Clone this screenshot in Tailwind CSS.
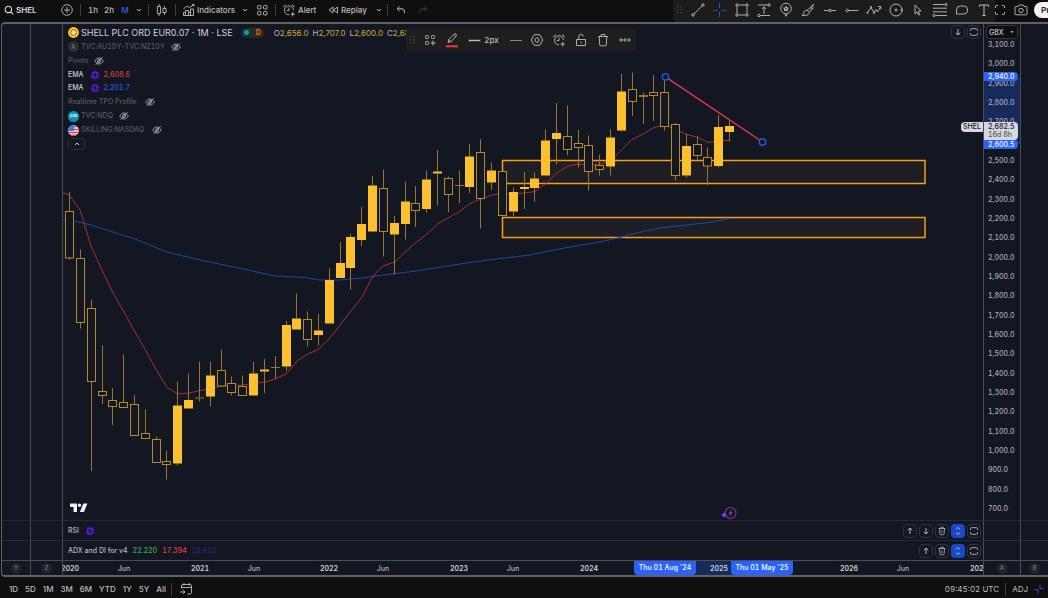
<!DOCTYPE html>
<html lang="en">
<head>
<meta charset="utf-8">
<meta name="viewport" content="width=device-width, initial-scale=1">
<title>SHEL – Chart</title>
<script src="https://cdn.jsdelivr.net/npm/@tailwindcss/browser@4"></script>
</head>
<body class="flex h-screen flex-col overflow-hidden bg-[#0f0f0f] font-['Inter',sans-serif] text-[8px] font-medium leading-[10px] text-[#bdbdbd] tabular-nums">

<!-- Shared symbols -->
<svg class="hidden" aria-hidden="true">
  <symbol id="chev" viewBox="0 0 8 8"><path d="M2 3l2 2 2-2" fill="none" stroke="currentColor"/></symbol>
  <symbol id="grip" viewBox="0 0 6 10"><g fill="#4c4c4c"><rect x="0" y="1" width="1.3" height="1.3"/><rect x="3.5" y="1" width="1.3" height="1.3"/><rect x="0" y="4.2" width="1.3" height="1.3"/><rect x="3.5" y="4.2" width="1.3" height="1.3"/><rect x="0" y="7.4" width="1.3" height="1.3"/><rect x="3.5" y="7.4" width="1.3" height="1.3"/></g></symbol>
  <symbol id="eye" viewBox="0 0 10 10"><g fill="none" stroke="#a8a8a8" stroke-width=".9"><path d="M.7 5C2 2.800 3.400 2 5 2s3 .8 4.300 3C8 7.200 6.600 8 5 8S2 7.200.7 5z"/><circle cx="5" cy="5" r="1.500"/><path d="M1.700 8.800L8.600 1.200"/></g></symbol>
  <symbol id="sync" viewBox="0 0 10 10"><circle cx="5" cy="5" r="4.800" fill="#24145a"/><circle cx="5" cy="5" r="3" fill="none" stroke="#6226e6" stroke-width="1.200" stroke-dasharray="7.800 1.600" stroke-dashoffset="-1"/><path d="M8.500 3.500L7 5.800 6 4.300zM1.500 6.500L3 4.200l1 1.500z" fill="#6226e6"/></symbol>
  <symbol id="up" viewBox="0 0 10 10"><path d="M5 8V2M2.700 4.300L5 2l2.300 2.300" fill="none" stroke="currentColor"/></symbol>
  <symbol id="down" viewBox="0 0 10 10"><path d="M5 2v6M2.700 5.700L5 8l2.300-2.300" fill="none" stroke="currentColor"/></symbol>
  <symbol id="trash" viewBox="0 0 10 10"><path d="M1.500 2.500h7M3.700 2.300V1.200h2.600v1.100M2.500 2.500l.4 5.500q0 .7.7.7h2.800q.7 0 .7-.7l.4-5.500M5 4.300v2.700" fill="none" stroke="currentColor" stroke-width=".8"/></symbol>
  <symbol id="updown" viewBox="0 0 10 10"><path d="M3 3.400L5 1.500l2 1.900M3 6.600l2 1.900 2-1.900" fill="none" stroke="currentColor"/></symbol>
  <symbol id="maxi" viewBox="0 0 10 10"><path d="M1.500 4V2.700q0-1 1-1h5q1 0 1 1V4M1.500 6v1.300q0 1 1 1h5q1 0 1-1V6" fill="none" stroke="currentColor" stroke-width=".9"/></symbol>
  <symbol id="alarm" viewBox="0 0 14 14"><g fill="none" stroke="currentColor" stroke-width=".9"><path d="M11.500 7.200A4.500 4.500 0 1 0 7 11.800M7 4.500V7.500H4.800M1.600 4.200a3 3 0 0 1 2.300-2.400M10.100 1.800a3 3 0 0 1 2.300 2.400M10.700 9v4.400M8.500 11.200h4.400"/></g></symbol>
</svg>

<header class="flex h-[22px] shrink-0 items-center justify-between">
  <nav class="flex items-center pb-[3px]" aria-label="Chart toolbar">
    <button class="flex w-[50px] items-center gap-0.5 pl-1 text-[8px] font-semibold text-[#dbdbdb]"><svg class="size-2.5 shrink-0" viewBox="0 0 10 10"><path d="M6.800 6.800L9.300 9.500M1.200 4.400a3.200 3.200 0 1 0 6.400 0 3.200 3.200 0 1 0-6.400 0" fill="none" stroke="currentColor" stroke-width="1.100"/></svg>SHEL</button>
    <button class="grid w-[30px] place-items-center" aria-label="Compare"><svg class="ml-1 size-3.5" viewBox="0 0 14 14"><path d="M7 4v6M4 7h6M1.700 7a5.300 5.300 0 1 0 10.600 0 5.300 5.300 0 1 0-10.600 0" fill="none" stroke="currentColor" stroke-width=".9"/></svg></button>
    <i class="h-3 w-px bg-[#3d3d3d]"></i>
    <button class="ml-1 w-4">1h</button>
    <button class="w-4">2h</button>
    <button class="w-4 text-[#2962ff]">M</button>
    <button class="mx-0.5 w-2" aria-label="Intervals"><svg class="size-2" viewBox="0 0 8 8"><use href="#chev"/></svg></button>
    <i class="ml-[3px] h-3 w-px bg-[#3d3d3d]"></i>
    <button class="grid w-[26px] place-items-center" aria-label="Candles"><svg class="size-3.5" viewBox="0 0 14 14"><g fill="none" stroke="currentColor" stroke-width=".9"><path d="M4 1v2.500M4 10.500V13M2.400 3.500h3.200v7H2.400zM9.500 3v2.500M9.500 9.500V12M7.900 5.500h3.200v4H7.900z"/></g></svg></button>
    <i class="h-3 w-px bg-[#3d3d3d]"></i>
    <button class="ml-1.5 flex w-[59px] items-center gap-px"><svg class="size-3.5 shrink-0" viewBox="0 0 14 14"><path d="M1.500 12.500v-3h2v-2h3v2h2V6h3v6.500zM3.500 9.500v3M6.500 9.500v3M8.500 9v3.500M1.500 6l3.500-3 2.500 1.500L12 1.500M10 1.500h2v2" fill="none" stroke="currentColor" stroke-width=".9"/></svg>Indicators</button>
    <svg class="size-2" viewBox="0 0 8 8"><use href="#chev"/></svg>
    <button class="grid w-[26px] place-items-center" aria-label="Layouts"><svg class="size-3" viewBox="0 0 12 12"><g fill="none" stroke="currentColor" stroke-width=".9"><rect x="1.500" y="1.500" width="3.500" height="3.500" rx="1"/><rect x="7.500" y="1.500" width="3.500" height="3.500" rx="1"/><rect x="1.500" y="7.500" width="3.500" height="3.500" rx="1"/><rect x="7.500" y="7.500" width="3.500" height="3.500" rx="1"/></g></svg></button>
    <i class="h-3 w-px bg-[#3d3d3d]"></i>
    <button class="ml-1.5 flex w-[45px] items-center gap-0.5"><svg class="size-3.5 shrink-0"><use href="#alarm"/></svg>Alert</button>
    <button class="flex w-[48px] items-center gap-0.5"><svg class="size-3 shrink-0" viewBox="0 0 12 12"><path d="M6 3v6L2 6zM10.500 3v6l-4-3z" fill="none" stroke="currentColor" stroke-width=".9"/></svg>Replay</button>
    <svg class="size-2" viewBox="0 0 8 8"><use href="#chev"/></svg>
    <i class="ml-1 h-3 w-px bg-[#3d3d3d]"></i>
    <button class="grid w-[25px] place-items-center" aria-label="Undo"><svg class="size-2.5" viewBox="0 0 10 10"><path d="M3.500 1.500L1.200 3.800l2.300 2.300M1.500 3.800h4.500q2.500 0 2.500 3V8" fill="none" stroke="currentColor"/></svg></button>
    <button class="grid w-[20px] place-items-center text-[#3d3d3d]" aria-label="Redo"><svg class="size-2.5" viewBox="0 0 10 10"><path d="M6.500 1.500l2.300 2.300-2.300 2.300M8.500 3.800H4q-2.500 0-2.500 3V8" fill="none" stroke="currentColor"/></svg></button>
  </nav>

  <div class="flex h-full items-center">
    <div class="flex h-full items-center rounded-b bg-[#1c1c1c] pb-[3px]" role="toolbar" aria-label="Favourite drawing tools">
      <span class="grid w-3.5 place-items-center"><svg class="h-2.5 w-1.5"><use href="#grip"/></svg></span>
      <button class="grid w-[22px] place-items-center" aria-label="Trend line"><svg class="size-3.5" viewBox="0 0 14 14"><g fill="none" stroke="currentColor" stroke-width=".9"><path d="M3 11L11 3"/><circle cx="2" cy="12" r="1.200"/><circle cx="12" cy="2" r="1.200"/></g></svg></button>
      <button class="grid w-[22px] place-items-center text-[#2450c8]" aria-label="Crosshair"><svg class="size-3.5" viewBox="0 0 14 14"><path d="M6.500 0v5M6.500 9v5M0 7.500h4.500M8.500 7.500H13" stroke="currentColor"/></svg></button>
      <button class="grid w-[22px] place-items-center" aria-label="Rectangle"><svg class="size-3.5" viewBox="0 0 14 14"><g fill="none" stroke="currentColor" stroke-width=".9"><path d="M3.500 2h7M3.500 12h7M2 3.500v7M12 3.500v7"/><circle cx="2" cy="2" r="1.200"/><circle cx="12" cy="2" r="1.200"/><circle cx="2" cy="12" r="1.200"/><circle cx="12" cy="12" r="1.200"/></g></svg></button>
      <button class="grid w-[22px] place-items-center" aria-label="Price range"><svg class="size-3.5" viewBox="0 0 14 14"><g fill="none" stroke="currentColor" stroke-width=".9"><path d="M1 2h9.500M3.500 12.500H13M7 11V4M5 6l2-2.200L9 6"/><circle cx="12" cy="2" r="1.200"/><circle cx="2" cy="12.500" r="1.200"/></g></svg></button>
      <button class="grid w-[22px] place-items-center" aria-label="Pin"><svg class="h-4 w-3.5" viewBox="0 0 14 16"><circle cx="7" cy="6.500" r="5.300" fill="none" stroke="currentColor" stroke-width=".9"/><path d="M7 3.300l1 2.100 2.300.3-1.700 1.600.4 2.300-2-1.100-2 1.100.4-2.300L3.700 5.700 6 5.400zM5.500 12.500h3L7 15z" fill="currentColor"/><circle cx="7" cy="6.500" r=".8" fill="#1c1c1c"/></svg></button>
      <button class="grid w-[22px] place-items-center" aria-label="Brush"><svg class="size-3.5" viewBox="0 0 14 14"><path d="M1 12.500c2-.5 1.500-2.500 2.300-4 .8-1.300 2.700-1.500 4-.5s1 2.500 0 3.500c-1.500 1.200-4 1-6.300 1zM6 7.500L12.700 1.200M8.500 9L12.800 4.500M12.700 1.200l-3 5.300" fill="none" stroke="currentColor" stroke-width=".9"/></svg></button>
      <button class="grid w-[22px] place-items-center" aria-label="Horizontal line"><svg class="size-3.5" viewBox="0 0 14 14"><g fill="none" stroke="currentColor" stroke-width=".9"><path d="M1 7.500h4.700M8.300 7.500H13"/><circle cx="7" cy="7.500" r="1.300"/></g></svg></button>
      <button class="grid w-[22px] place-items-center" aria-label="Horizontal ray"><svg class="size-3.5" viewBox="0 0 14 14"><g fill="none" stroke="currentColor" stroke-width=".9"><path d="M3.500 7.500H13.500"/><circle cx="2.200" cy="7.500" r="1.300"/></g></svg></button>
      <button class="grid w-[22px] place-items-center" aria-label="Elliott wave"><svg class="size-4" viewBox="0 0 16 14"><g fill="none" stroke="currentColor" stroke-width=".9"><path d="M1.500 9.500L5 4.500l3 5 2-3 1.500 2.500 3-5M12 3.500h2.800v2.800"/><circle cx="1.500" cy="9.800" r=".7"/><circle cx="5" cy="4.200" r=".7"/><circle cx="8" cy="9.800" r=".7"/></g></svg></button>
      <button class="grid w-[22px] place-items-center" aria-label="Circle"><svg class="size-3.5" viewBox="0 0 14 14"><g fill="none" stroke="currentColor" stroke-width=".9"><circle cx="7" cy="7" r="6"/><circle cx="7" cy="7" r="1"/><circle cx="13" cy="7" r="1" fill="#1c1c1c"/></g></svg></button>
      <button class="grid w-[22px] place-items-center" aria-label="Arrow"><svg class="size-3" viewBox="0 0 12 12"><path d="M3 1l6 6-2.800.3 1.600 3.200-1.300.6L5 8 3 9.800z" fill="none" stroke="currentColor" stroke-width=".9"/></svg></button>
      <button class="grid w-[22px] place-items-center" aria-label="Fib retracement"><svg class="size-4" viewBox="0 0 16 14"><g fill="none" stroke="currentColor" stroke-width=".9"><path d="M1 1.500h11.500M1 5.200h14M1 8.800h14M3.500 12.500H15"/><circle cx="14" cy="1.500" r="1.100"/><circle cx="2" cy="12.500" r="1.100"/></g></svg></button>
      <button class="grid w-[22px] place-items-center" aria-label="Callout"><svg class="size-3.5" viewBox="0 0 14 14"><path d="M5.500 3h3.200a4 4 0 0 1 0 8H1.500V7a4 4 0 0 1 4-4z" fill="none" stroke="currentColor" stroke-width=".9"/></svg></button>
      <button class="grid w-[22px] place-items-center" aria-label="Text"><svg class="size-3.5" viewBox="0 0 14 14"><path d="M2.500 3.800V2h9v1.800M7 2v10.500M5.500 12.500h3" fill="none" stroke="currentColor"/></svg></button>
    </div>
    <button class="mb-[3px] grid w-2.5 place-items-center" aria-label="Fullscreen"><svg class="size-2.5" viewBox="0 0 10 10"><path d="M.5 3V1.500q0-1 1-1H3M7 .5h1.500q1 0 1 1V3M9.500 7v1.500q0 1-1 1H7M3 9.500H1.500q-1 0-1-1V7" fill="none" stroke="currentColor"/></svg></button>
    <button class="mb-[3px] grid w-[29px] place-items-center" aria-label="Snapshot"><svg class="ml-0.5 size-3.5" viewBox="0 0 14 14"><g fill="none" stroke="currentColor" stroke-width=".9"><path d="M1 4.500q0-1 1-1h2l1-1.500h4l1 1.500h2q1 0 1 1v6.300q0 1-1 1H2q-1 0-1-1z"/><circle cx="7" cy="7.500" r="2.200"/></g></svg></button>
    <button class="mb-[3px] h-4 w-3.5 overflow-hidden rounded-l-full bg-[#f2f2f2] pl-[7px] text-left text-[8px] font-semibold text-[#111]">Publish</button>
  </div>
</header>

<main class="relative ml-px grid min-h-0 flex-1 grid-cols-[29px_32px_minmax(0,1fr)_37px_27px] grid-rows-[minmax(0,1fr)_20px_20px_15px] rounded-l-sm border-y-2 border-l border-[#626266] bg-[#131722]">
  <!-- Price pane -->
  <div class="border-r border-[#4a4c54]"></div>
  <div class="border-r border-[#4a4c54]"></div>
  <section class="relative min-w-0 overflow-hidden border-r border-[#4a4c54]" aria-label="Price chart">
    <svg id="chart" class="absolute inset-0 size-full" viewBox="63 24 920 496" preserveAspectRatio="none">
      <g fill="#1e1f24" stroke="#f59c1b" stroke-width="1.500"><rect x="502.500" y="160.500" width="422.500" height="23"/><rect x="502.500" y="217.500" width="422.500" height="20"/></g>
      <path fill="none" stroke="#2145a8" d="M62 219.500L74 221L91 225L135 239L167 252L200 260L248 270L275 276L305 277.500L319 280L340 280L362 278L376 276L416 271L438 267.500L470 262.500L492 259.500L530 255L554 250L578 245.500L600 242L622 237L632 234L660 228L687 225L708 222.500L730 218.500"/>
      <path fill="none" stroke="#a52f34" d="M62 192L69.500 195.500L80 210L91 246L102 270L113 293L124 312L135 332L146 351L157 371L167 387.500L178 394L189 393L200 390.500L210 389L221 386L232 385.500L243 385L254 383.500L265 382L275 379L286 374L297 361L308 354L318 349.500L329 339L340 325L351 311L362 297L373 276L383 266L395 262L405 252L416 242.500L427 234L438 223.500L449 217.500L459 212L470 203.500L481 199L492 195L502 194L513 194L524 193L535 191.500L546 183.500L557 173L568 166L578 164L589 165L600 164L611 161L622 149.500L632 139.500L643 134L654 127.500L665 125L676 130L687 134.500L697 137L708 142.500L719 140.500L730 140.500"/>
      <g id="candles"></g>
      <path d="M665.500 76.800L762.500 142" stroke="#e8334a" stroke-width="1.500"/>
      <g fill="#131722" stroke="#2456e0" stroke-width="1.400"><circle cx="665.500" cy="76.800" r="3.200"/><circle cx="762.500" cy="142" r="3.200"/></g>
      <g><circle cx="730.500" cy="513" r="5.500" fill="#131722" stroke="#8e2f9e" stroke-width="1.200"/><path d="M731.800 509.500l-3.300 4h2l-1.200 3 3.300-4h-2z" fill="#b044c4"/><path d="M724 512l1 2 2 1-2 1-1 2-1-2-2-1 2-1z" fill="#6a4cff"/></g>
      <g fill="#f0f0f0" stroke="#050505" stroke-width=".8" paint-order="stroke"><path d="M70 503.500h7v8.500h-3.500v-5H70z"/><circle cx="79.500" cy="505.300" r="1.700"/><path d="M83.300 503.500H87.500L84 512H79.800z"/></g>
    </svg>

    <div class="relative ml-[5px] mt-0.5 grid h-[125px] w-fit auto-rows-fr items-center text-[7px] text-[#555861]">
      <div class="flex items-center">
        <svg class="size-[11px]" viewBox="0 0 11 11"><circle cx="5.500" cy="5.500" r="5.400" fill="#f7d117"/><circle cx="5.500" cy="5.500" r="3.200" fill="#e8402a"/><circle cx="5.500" cy="5.500" r="2.300" fill="#fdf3c4"/></svg>
        <h1 class="ml-0.5 whitespace-nowrap text-[9px] font-normal text-[#d0d2d8] proportional-nums">SHELL PLC ORD EUR0.07 · 1M · LSE</h1>
        <span class="ml-2 flex h-2.5 overflow-hidden rounded-full text-[7px] font-semibold"><i class="grid w-3 place-items-center bg-[#123233]"><b class="size-[5px] rounded-full bg-[#0fa388]"></b></i><span class="w-[11px] bg-[#3a2518] text-center text-[#e07a1c]">D</span></span>
        <p class="ml-2.5 flex gap-1 whitespace-nowrap text-[8px] font-normal text-[#d0a638] proportional-nums"><span><span class="text-[#b8bac0]">O</span>2,656.0</span><span><span class="text-[#b8bac0]">H</span>2,707.0</span><span><span class="text-[#b8bac0]">L</span>2,600.0</span><span><span class="text-[#b8bac0]">C</span>2,682.5</span></p>
      </div>
      <div class="flex items-center"><span class="grid size-[11px] place-items-center rounded-full bg-[#2e2e2e] text-[6px] text-[#777]">A</span><span class="ml-0.5">TVC:AU10Y-TVC:NZ10Y</span><svg class="ml-1.5 size-2.5"><use href="#eye"/></svg></div>
      <div class="flex items-center">Pivots<svg class="ml-1.5 size-2.5"><use href="#eye"/></svg></div>
      <div class="flex items-center text-[#c9cbd1]">EMA<svg class="ml-1.5 size-2.5"><use href="#sync"/></svg><span class="ml-1 text-[#d23c40]">2,608.6</span></div>
      <div class="flex items-center text-[#c9cbd1]">EMA<svg class="ml-1.5 size-2.5"><use href="#sync"/></svg><span class="ml-1 text-[#285ae0]">2,201.7</span></div>
      <div class="flex items-center">Realtime TPO Profile<svg class="ml-2 size-2.5"><use href="#eye"/></svg></div>
      <div class="flex items-center"><span class="grid size-[11px] place-items-center rounded-full bg-[#0a93b5] text-[4px] font-bold text-white">100</span><span class="ml-0.5">TVC:NDQ</span><svg class="ml-1.5 size-2.5"><use href="#eye"/></svg></div>
      <div class="flex items-center"><svg class="size-[11px]" viewBox="0 0 11 11"><clipPath id="round"><circle cx="5.500" cy="5.500" r="5.400"/></clipPath><g clip-path="url(#round)"><path d="M0 0h11v11H0z" fill="#f2f2f2"/><path d="M5 1.500h6M5 4.500h6M0 7.500h11M0 10.300h11" stroke="#e23b3b" stroke-width="1.500"/><path d="M0 0h6v6H0z" fill="#2f7be0"/></g></svg><span class="ml-0.5">SKILLING:NASDAQ</span><svg class="ml-2 size-2.5"><use href="#eye"/></svg></div>
      <button class="grid h-3 w-[17px] place-items-center rounded-sm border border-[#2f323b] text-[#c9cbd1]" aria-label="Collapse legend"><svg class="size-2" viewBox="0 0 8 8"><path d="M2 5l2-2 2 2" fill="none" stroke="currentColor"/></svg></button>
    </div>

    <div class="absolute right-0.5 top-px flex gap-0.5 text-[#b5b7bd]">
      <button class="grid size-3.5 place-items-center rounded-sm border border-[#2f323b]" aria-label="Move pane down"><svg class="size-2.5"><use href="#down"/></svg></button>
      <button class="grid size-3.5 place-items-center rounded-sm border border-[#2f323b]" aria-label="Maximise pane"><svg class="size-2.5"><use href="#maxi"/></svg></button>
    </div>
    <span class="absolute right-0 top-[98px] rounded-l-sm bg-[#d6d8e0] px-0.5 text-[7px] leading-[10px] text-[#131722]">SHEL</span>

    <div class="absolute left-[343px] top-[5px] flex h-[22px] items-center rounded bg-[#1e1e1e]" role="toolbar" aria-label="Drawing options">
      <span class="grid w-[13px] place-items-center"><svg class="h-2.5 w-1.5"><use href="#grip"/></svg></span>
      <button class="grid w-[22px] place-items-center" aria-label="Templates"><svg class="size-3" viewBox="0 0 12 12"><g fill="none" stroke="currentColor" stroke-width=".9"><rect x="1.500" y="1.500" width="3" height="3" rx=".8"/><rect x="7.500" y="1.500" width="3" height="3" rx=".8"/><rect x="1.500" y="7.500" width="3" height="3" rx=".8"/><path d="M9 6.500v5M6.500 9h5"/></g></svg></button>
      <button class="grid w-[22px] place-items-center" aria-label="Line colour"><svg class="h-4 w-3.5" viewBox="0 0 14 16"><path d="M3 10.500l.8-3L9 2.200q1-.8 2 .1t0 2L6 9.700zM4 7.500l2 2M9 3.500l1.500 1.500" fill="none" stroke="currentColor" stroke-width=".9"/><path d="M1 13.300h12v2H1z" fill="#f23645"/></svg></button>
      <button class="flex w-[42px] items-center justify-center gap-1"><i class="h-px w-[11px] bg-current ring-1 ring-current/20"></i>2px</button>
      <button class="grid w-[21px] place-items-center" aria-label="Line style"><i class="h-px w-3 bg-[#888]"></i></button>
      <button class="grid w-[22px] place-items-center" aria-label="Settings"><svg class="size-3.5" viewBox="0 0 14 14"><g fill="none" stroke="currentColor" stroke-width=".9"><path d="M4.200 1.700h5.600L12.800 7l-3 5.300H4.200L1.200 7z" stroke-linejoin="round"/><circle cx="7" cy="7" r="2.200"/></g></svg></button>
      <button class="grid w-[22px] place-items-center" aria-label="Add alert"><svg class="size-3.5"><use href="#alarm"/></svg></button>
      <button class="grid w-[22px] place-items-center" aria-label="Lock"><svg class="size-3.5" viewBox="0 0 14 14"><path d="M2.500 6.500h9v6h-9zM4.700 6.500V4a2.300 2.300 0 0 1 4.600-.5M7 8.700v1.600" fill="none" stroke="currentColor" stroke-width=".9" stroke-linejoin="round"/></svg></button>
      <button class="grid w-[22px] place-items-center" aria-label="Delete"><svg class="size-3.5" viewBox="0 0 14 14"><path d="M2 3.500h10M5 3.300V1.500h4v1.800M3.300 3.500l.4 8.500q0 .8.800.8h5q.8 0 .8-.8l.4-8.500" fill="none" stroke="currentColor" stroke-width=".9"/></svg></button>
      <button class="grid w-[22px] place-items-center" aria-label="More"><svg class="h-2 w-3" viewBox="0 0 12 8"><g fill="none" stroke="currentColor" stroke-width=".9"><circle cx="2" cy="4" r="1.200"/><circle cx="6" cy="4" r="1.200"/><circle cx="10" cy="4" r="1.200"/></g></svg></button>
    </div>
  </section>

  <aside class="relative overflow-hidden border-r border-[#4a4c54] text-[7px] text-[#a9abb2]" aria-label="Price scale">
    <div class="absolute inset-x-0 top-[53px] h-[67px] bg-[#172a5c]"></div>
    <ol id="prices" class="absolute inset-x-0 bottom-1.5 top-4 flex flex-col justify-between pl-1"></ol>
    <label class="absolute left-0.5 top-px block h-3.5 w-8">
      <span class="sr-only">Currency</span>
      <select class="block size-full appearance-none rounded-sm border border-[#33353c] bg-[#0f0f0f] pl-0.5 text-[7px] leading-none text-[#c9cbd1]"><option>GBX</option></select>
      <svg class="pointer-events-none absolute right-0.5 top-[3px] size-2" viewBox="0 0 8 8"><path d="M2.200 3.200h3.600L4 5z" fill="#c9cbd1"/></svg>
    </label>
    <span class="absolute left-0 top-12 w-[34px] rounded-r-sm bg-[#2962ff] pl-1 leading-[9px] text-white">2,940.0</span>
    <span class="absolute left-0 top-[98px] w-[34px] rounded-r-sm bg-[#d6d8e0] pl-1 leading-[8px] text-[#131722]"><span class="block pt-px">2,682.5</span><span class="block pb-px text-[#555a66]">16d 8h</span></span>
    <span class="absolute left-0 top-[116px] w-[34px] rounded-r-sm bg-[#2962ff] pl-1 leading-[9px] text-white">2,600.5</span>
  </aside>
  <div></div>

  <!-- RSI pane -->
  <div class="border-r border-t border-[#4a4c54] border-t-[#262a35]"></div>
  <div class="border-r border-t border-[#4a4c54] border-t-[#262a35]"></div>
  <section class="flex items-center justify-between border-r border-t border-[#4a4c54] border-t-[#262a35] pl-[5px] pr-0.5" aria-label="RSI">
    <p class="flex items-center text-[7px] text-[#b5b7bd]">RSI<svg class="ml-1.5 size-2.5"><use href="#sync"/></svg></p>
    <div class="flex gap-0.5 text-[#b5b7bd]">
      <button class="grid size-3.5 place-items-center rounded-sm border border-[#2f323b]" aria-label="Up"><svg class="size-2.5"><use href="#up"/></svg></button>
      <button class="grid size-3.5 place-items-center rounded-sm border border-[#2f323b]" aria-label="Down"><svg class="size-2.5"><use href="#down"/></svg></button>
      <button class="grid size-3.5 place-items-center rounded-sm border border-[#2f323b]" aria-label="Delete pane"><svg class="size-2.5"><use href="#trash"/></svg></button>
      <button class="grid size-3.5 place-items-center rounded-sm bg-[#1848cc]" aria-label="Expand pane"><svg class="size-2.5"><use href="#updown"/></svg></button>
      <button class="grid size-3.5 place-items-center rounded-sm border border-[#2f323b]" aria-label="Maximise pane"><svg class="size-2.5"><use href="#maxi"/></svg></button>
    </div>
  </section>
  <div class="border-r border-t border-[#4a4c54] border-t-[#262a35]"></div>
  <div class="border-t border-[#262a35]"></div>

  <!-- ADX pane -->
  <div class="border-r border-t border-[#4a4c54] border-t-[#262a35]"></div>
  <div class="border-r border-t border-[#4a4c54] border-t-[#262a35]"></div>
  <section class="flex items-center justify-between border-r border-t border-[#4a4c54] border-t-[#262a35] pl-[5px] pr-0.5" aria-label="ADX and DI">
    <p class="flex gap-[5px] text-[7px] text-[#b5b7bd]">ADX and DI for v4 <span class="text-[#3fa846]">22.220</span><span class="text-[#e03e43]">17.394</span><span class="text-[#33208a]">22.612</span></p>
    <div class="flex gap-0.5 text-[#b5b7bd]">
      <button class="grid size-3.5 place-items-center rounded-sm border border-[#2f323b]" aria-label="Up"><svg class="size-2.5"><use href="#up"/></svg></button>
      <button class="grid size-3.5 place-items-center rounded-sm border border-[#2f323b]" aria-label="Delete pane"><svg class="size-2.5"><use href="#trash"/></svg></button>
      <button class="grid size-3.5 place-items-center rounded-sm bg-[#1848cc]" aria-label="Expand pane"><svg class="size-2.5"><use href="#updown"/></svg></button>
      <button class="grid size-3.5 place-items-center rounded-sm border border-[#2f323b]" aria-label="Maximise pane"><svg class="size-2.5"><use href="#maxi"/></svg></button>
    </div>
  </section>
  <div class="border-r border-t border-[#4a4c54] border-t-[#262a35]"></div>
  <div class="border-t border-[#262a35]"></div>

  <!-- Time scale -->
  <div class="grid place-items-center border-r border-t border-[#4a4c54] text-[6px] text-[#777]"><span class="grid size-[11px] place-items-center rounded-full bg-[#22242b]">Y</span></div>
  <div class="grid place-items-center border-r border-t border-[#4a4c54] text-[6px] text-[#777]"><span class="grid size-[11px] place-items-center rounded-full bg-[#22242b]">Z</span></div>
  <div id="times" class="relative overflow-hidden border-r border-t border-[#4a4c54] text-[7px] text-[#b5b7bd]">
    <div class="absolute inset-y-0 left-[603px] w-[97px] bg-[#172a5c]"></div>
  </div>
  <div class="grid place-items-center border-r border-t border-[#4a4c54] text-[6px] text-[#777]"><span class="grid size-[11px] place-items-center rounded-full bg-[#22242b]">A</span></div>
  <div class="grid place-items-center border-t border-[#4a4c54] text-[6px] text-[#777]"><span class="grid size-[11px] place-items-center rounded-full bg-[#22242b]">B</span></div>
</main>

<footer class="flex h-[21px] shrink-0 items-center justify-between pt-0.5">
  <div class="flex items-center gap-[7px] pl-[9px] proportional-nums">
    <button>1D</button><button>5D</button><button>1M</button><button>3M</button><button>6M</button><button>YTD</button><button>1Y</button><button>5Y</button><button>All</button>
    <i class="-ml-0.5 h-3 w-px bg-[#3d3d3d]"></i>
    <button aria-label="Go to date"><svg class="size-3.5" viewBox="0 0 14 14"><path d="M2.500 6.500V4q0-1.500 1.500-1.500h7q1.500 0 1.500 1.500v6.500q0 1.500-1.500 1.500H8.500M2.500 5.500h10M5 1v2.500M10 1v2.500M1 10h5M4 8l2 2-2 2" fill="none" stroke="currentColor" stroke-width=".9"/></svg></button>
  </div>
  <div class="flex items-center gap-1.5 pr-1">
    <button class="font-normal">09:45:02 UTC</button>
    <i class="h-3 w-px bg-[#3d3d3d]"></i>
    <button class="font-normal">ADJ</button>
    <button class="text-[#2450d8]" aria-label="Toggle panel"><svg class="size-2.5" viewBox="0 0 10 10"><path d="M.5 5.500H4v4M6 .5v4h3.500" fill="none" stroke="currentColor"/></svg></button>
  </div>
</footer>

<script>
// Monthly candles from Jan 2020: [high, bodyTop, bodyBottom, low, kind] (0 falling, 1 rising, 2 flat)
const data = [
[192,211.5,258,259.5,0],[249.5,258.5,322.5,328.5,0],[299.5,308.5,381.5,471,0],[345.5,391.5,395.5,404,0],[388,400.5,406.5,425,0],[354.5,402.5,407.5,408,0],[395,404.5,435.5,435.5,0],[409.5,433.5,438.5,438.5,0],[436.5,439.5,462.5,462.5,0],[450.5,461.5,464.5,479.5,0],
[381.5,405.5,463.5,465.5,1],[373.5,400,408.5,408.5,1],[361.5,397.5,398.5,401.5,2],[361.5,375.5,396.5,406.5,1],[349.5,370.5,386,386.5,0],[376.5,383.5,392.5,395.5,0],[375.5,386.5,395.5,395.5,0],[362,373.5,395.5,395.5,1],[359,369.5,371.5,393,1],[356.5,367,368,379,2],
[321,325,366.5,371,1],[293.5,318.5,329.5,329.5,1],[311.5,319.5,339.5,346.5,0],[314,330.5,335,345.5,1],[268.5,280,323.5,323.5,1],[242,263,278,278,1],[234,237,268,289.5,1],[207,224,240,246,1],[176,185.5,231.5,232,1],[169.5,188.5,231.5,256.5,0],
[216,223,234.5,274.5,1],[181.5,201.5,224,239.5,1],[186,203.5,210.5,227,0],[170.5,179.5,209,212.5,1],[150,171.5,173.5,205.5,1],[176.5,178.5,194.5,212,0],[170.5,185,186,203,2],[144,156.5,187,193,1],[139,152.5,198.5,228.5,0],[162.5,170.5,182.5,190,1],
[171,171.5,215.5,215.5,0],[187.5,192,211.5,216,1],[172,187,189,209,1],[172.5,178.5,188,202,1],[129.5,140.5,175.5,175.5,1],[103,133,139,164.5,1],[105.5,136.5,149.5,155,0],[130,143.5,147.5,167.5,0],[135.5,145.5,171.5,190.5,0],[154.5,165.5,169.5,175.5,0],
[129,137.5,166.5,175.5,1],[74,91.5,130.5,131.5,1],[72.5,89.5,101.5,116,0],[92.5,95,97,124,2],[75,92.5,95.5,121,0],[80,92.5,126.5,130.5,0],[123,124.5,175.5,180.5,0],[134,146,175.5,177.5,1],[136.5,144.5,155.5,159.5,0],[147.5,157.5,166,185,0],
[115,127,166,167.5,1],[120,126,132,141.5,1]];
let out = '';
data.forEach(([h, t, b, l, k], i) => {
  const x = 69.6 + 10.82 * i, c = Math.floor(x) + 0.5;
  out += `<path d="M${c} ${h}V${t}M${c} ${b}V${l}" stroke="#9a762a"/>`;
  if (k === 1) out += `<rect x="${c - 4.5}" y="${t}" width="9" height="${b - t}" fill="#fcc02e"/>`;
  else if (k === 2) out += `<rect x="${c - 4.5}" y="${t}" width="9" height="${b - t}" fill="#9a762a"/>`;
  else out += `<rect x="${c - 4}" y="${t}" width="8" height="${b - t}" fill="#131722" stroke="#b5892a"/>`;
});
document.getElementById('candles').innerHTML = out;

const prices = document.getElementById('prices');
for (let p = 3100; p >= 700; p -= 100) {
  const li = document.createElement('li');
  li.textContent = p.toLocaleString('en-US', { minimumFractionDigits: 1 });
  li.className = 'leading-[10px]';
  prices.append(li);
}

// Time labels sit at their share of the pane width
const times = document.getElementById('times');
[['2020', 7], ['Jun', 61], ['2021', 137], ['Jun', 191], ['2022', 266], ['Jun', 320], ['2023', 396], ['Jun', 450], ['2024', 526], ['2025', 656], ['2026', 786], ['Jun', 840], ['2027', 916],
 ["Thu 01 Aug '24", 602, 1], ["Thu 01 May '25", 699, 1]].forEach(([text, x, mark]) => {
  const s = document.createElement('span');
  s.textContent = text;
  s.className = mark
    ? 'absolute inset-y-0 w-[62px] -translate-x-1/2 rounded-b-sm bg-[#2962ff] text-center leading-[14px] text-white'
    : 'absolute inset-y-0 -translate-x-1/2 leading-[15px]' + (text === 'Jun' ? '' : ' font-semibold text-[#d0d2d8]');
  s.style.left = (x / 920 * 100) + '%';
  times.append(s);
});
</script>
</body>
</html>
